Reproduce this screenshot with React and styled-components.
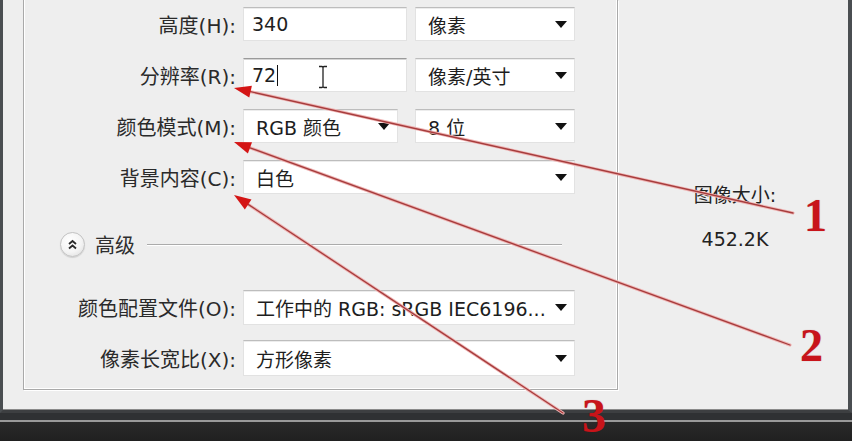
import React from "react";
import styled, { createGlobalStyle } from "styled-components";

const GlobalStyle = createGlobalStyle`
  html, body {
    margin: 0;
    padding: 0;
    background: #232323;
  }
  body {
    font-family: "DejaVu Sans", "Noto Sans CJK SC", sans-serif;
    color: #222;
  }
`;

const Screen = styled.div`
  position: relative;
  width: 852px;
  height: 441px;
  overflow: hidden;
  background: #222;
`;

const Window = styled.div`
  box-sizing: border-box;
  height: 413px;
  display: flex;
  background: #eeeeee;
  border-left: 3px solid #4a4e51;
  border-right: 4px solid #4a4e51;
  border-bottom: 3px solid #3d3f41;
  box-shadow: inset 0 -1px 0 #8a8a8a;
`;

const Taskbar = styled.div`
  height: 28px;
  background: linear-gradient(
    to bottom,
    #2f3133 0,
    #2f3133 7px,
    #9a9a9a 7px,
    #9a9a9a 9px,
    #2a2a2a 9px,
    #202020 100%
  );
`;

const Group = styled.div`
  box-sizing: border-box;
  width: 595px;
  height: 390px;
  margin-left: 20px;
  padding-top: 7px;
  border: 1px solid #a9a9a9;
  border-top: none;
  box-shadow: inset 1px -1px 0 #fff, inset -1px 0 0 #fff, 1px 1px 0 #fff;
  display: flex;
  flex-direction: column;
`;

const Row = styled.div`
  display: grid;
  grid-template-columns: 212px 1fr;
  column-gap: 7px;
  height: ${({ $h }) => $h || 34}px;
  margin-top: ${({ $gap }) => $gap || 0}px;
  align-items: center;
`;

const Label = styled.span`
  text-align: right;
  font-size: 20px;
  color: #2a2a2a;
  white-space: nowrap;
`;

const Fields = styled.div`
  display: flex;
  gap: ${({ $gap }) => $gap || 8}px;
  height: 100%;
`;

const Field = styled.div`
  position: relative;
  box-sizing: border-box;
  width: ${({ $w }) => $w}px;
  height: 100%;
  display: flex;
  align-items: center;
  padding: 0 6px 0 ${({ $select }) => ($select ? 12 : 8)}px;
  background: #fff;
  border: 1px solid #e2e2e2;
  border-top: 1px solid ${({ $focus }) => ($focus ? "#9a9a9a" : "#bdbdbd")};
  box-shadow: inset 0 1px 0 ${({ $focus }) => ($focus ? "#d4d4d4" : "#ececec")};
  font-size: 19px;
  color: #1e1e1e;
  white-space: nowrap;
`;

const Value = styled.span`
  flex: 1;
  overflow: hidden;
`;

const Caret = styled.span`
  display: inline-block;
  width: 1px;
  height: 21px;
  margin-left: 1px;
  vertical-align: -4px;
  background: #111;
`;

const Arrow = styled.span`
  width: 0;
  height: 0;
  border-left: 6px solid transparent;
  border-right: 6px solid transparent;
  border-top: 7px solid #111;
  margin-right: 1px;
`;

const IBeam = styled.svg`
  position: absolute;
  left: 74px;
  top: 6px;
`;

const Advanced = styled.div`
  display: flex;
  align-items: center;
  height: 24px;
  margin-top: 38px;
  padding-left: 36px;
  padding-right: 55px;
`;

const Toggle = styled.span`
  box-sizing: border-box;
  width: 25px;
  height: 25px;
  border-radius: 50%;
  border: 1px solid #c2c2c2;
  background: radial-gradient(circle at 40% 35%, #ffffff 0, #f4f4f4 55%, #d9d9d9 100%);
  box-shadow: 0 1px 1px rgba(0, 0, 0, 0.12);
  display: flex;
  align-items: center;
  justify-content: center;
`;

const AdvancedText = styled.span`
  margin-left: 10px;
  font-size: 20px;
  color: #2e2e2e;
`;

const Rule = styled.span`
  flex: 1;
  margin-left: 12px;
  height: 1px;
  background: #ababab;
  box-shadow: 0 1px 0 #fff;
`;

const SizeInfo = styled.div`
  flex: 1;
  display: flex;
  flex-direction: column;
  align-items: center;
  padding-top: 181px;
  padding-left: 4px;
  font-size: 19px;
  color: #222;
  line-height: 28px;
  gap: 16px;
`;

const Overlay = styled.svg`
  position: absolute;
  left: 0;
  top: 0;
  pointer-events: none;
`;

const Number = styled.span`
  position: absolute;
  left: ${({ $x }) => $x}px;
  top: ${({ $y }) => $y}px;
  font-family: "Liberation Serif", serif;
  font-weight: bold;
  font-size: ${({ $size }) => $size || 46}px;
  line-height: 0.85;
  color: #c8141a;
  text-shadow: 0 0 1px rgba(120, 0, 0, 0.4);
`;

const arrows = [
  { from: [793, 213], to: [234, 88] },
  { from: [790, 345], to: [234, 142] },
  { from: [563, 413], to: [234, 195] },
];

const headFor = ({ from, to }) => {
  const dx = from[0] - to[0];
  const dy = from[1] - to[1];
  const len = Math.hypot(dx, dy);
  const ux = dx / len;
  const uy = dy / len;
  const bx = to[0] + ux * 17;
  const by = to[1] + uy * 17;
  const px = -uy * 6;
  const py = ux * 6;
  return {
    base: [bx, by],
    points: `${to[0]},${to[1]} ${bx + px},${by + py} ${bx - px},${by - py}`,
  };
};

const Annotations = () => (
  <Overlay width="852" height="441" viewBox="0 0 852 441">
    {arrows.map((a, i) => {
      const head = headFor(a);
      return (
        <g key={i}>
          <line
            x1={a.from[0]}
            y1={a.from[1]}
            x2={head.base[0]}
            y2={head.base[1]}
            stroke="#efb4b4"
            strokeWidth="3.2"
            strokeLinecap="round"
          />
          <line
            x1={a.from[0]}
            y1={a.from[1]}
            x2={head.base[0]}
            y2={head.base[1]}
            stroke="#a63c3c"
            strokeWidth="1.3"
            strokeLinecap="round"
          />
          <polygon points={head.points} fill="#d41515" />
        </g>
      );
    })}
  </Overlay>
);

const Select = ({ w, children }) => (
  <Field $w={w} $select>
    <Value>{children}</Value>
    <Arrow />
  </Field>
);

const ChevronIcon = () => (
  <svg width="11" height="11" viewBox="0 0 11 11">
    <path
      d="M2 5 L5.5 2 L9 5 M2 9.5 L5.5 6.5 L9 9.5"
      fill="none"
      stroke="#2a2a2a"
      strokeWidth="1.8"
    />
  </svg>
);

export default function App() {
  return (
    <Screen>
      <GlobalStyle />
      <Window>
        <Group>
          <Row>
            <Label>高度(H):</Label>
            <Fields>
              <Field $w={164}>
                <Value>340</Value>
              </Field>
              <Select w={160}>像素</Select>
            </Fields>
          </Row>
          <Row $gap={17}>
            <Label>分辨率(R):</Label>
            <Fields>
              <Field $w={164} $focus>
                <Value>
                  72
                  <Caret />
                </Value>
                <IBeam width="10" height="24" viewBox="0 0 10 24">
                  <path
                    d="M1 1.5 H4 Q5 1.5 5 3 V21 Q5 22.5 4 22.5 H1 M9 1.5 H6 Q5 1.5 5 3 M5 21 Q5 22.5 6 22.5 H9"
                    fill="none"
                    stroke="#222"
                    strokeWidth="1.3"
                  />
                </IBeam>
              </Field>
              <Select w={160}>像素/英寸</Select>
            </Fields>
          </Row>
          <Row $gap={17}>
            <Label>颜色模式(M):</Label>
            <Fields $gap={17}>
              <Select w={155}>RGB 颜色</Select>
              <Select w={160}>8 位</Select>
            </Fields>
          </Row>
          <Row $gap={17}>
            <Label>背景内容(C):</Label>
            <Fields>
              <Select w={332}>白色</Select>
            </Fields>
          </Row>
          <Advanced>
            <Toggle>
              <ChevronIcon />
            </Toggle>
            <AdvancedText>高级</AdvancedText>
            <Rule />
          </Advanced>
          <Row $gap={34} $h={35}>
            <Label>颜色配置文件(O):</Label>
            <Fields>
              <Select w={332}>工作中的 RGB: sRGB IEC6196...</Select>
            </Fields>
          </Row>
          <Row $gap={15} $h={36}>
            <Label>像素长宽比(X):</Label>
            <Fields>
              <Select w={332}>方形像素</Select>
            </Fields>
          </Row>
        </Group>
        <SizeInfo>
          <span>图像大小:</span>
          <span>452.2K</span>
        </SizeInfo>
      </Window>
      <Taskbar />
      <Annotations />
      <Number $x={804} $y={196}>1</Number>
      <Number $x={800} $y={326}>2</Number>
      <Number $x={582} $y={396} $size={48}>3</Number>
    </Screen>
  );
}
